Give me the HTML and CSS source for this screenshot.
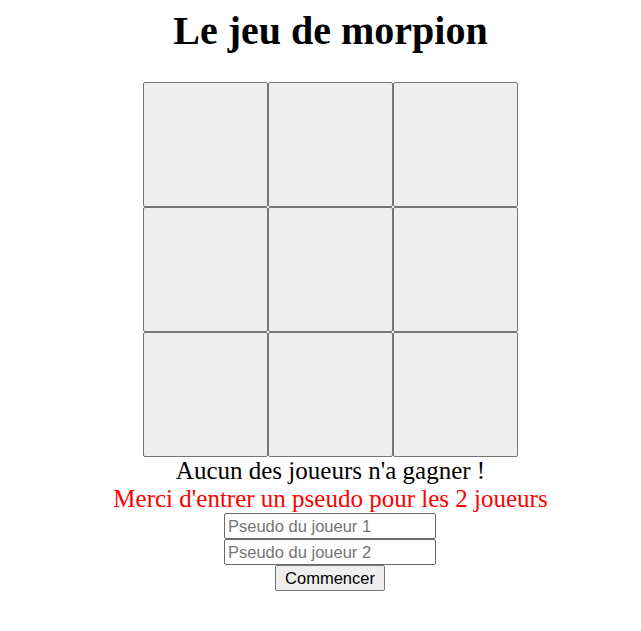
FILE: index.html
```html
<!DOCTYPE html>
<html lang="fr">
<head>
<meta charset="utf-8">
<title>Le jeu de morpion</title>
<link rel="stylesheet" href="styles.css">
</head>
<body>
<main class="page">
  <h1 class="title">Le jeu de morpion</h1>
  <div class="board">
    <button class="cell" type="button"></button>
    <button class="cell" type="button"></button>
    <button class="cell" type="button"></button>
    <button class="cell" type="button"></button>
    <button class="cell" type="button"></button>
    <button class="cell" type="button"></button>
    <button class="cell" type="button"></button>
    <button class="cell" type="button"></button>
    <button class="cell" type="button"></button>
  </div>
  <p class="status">Aucun des joueurs n'a gagner !</p>
  <p class="error">Merci d'entrer un pseudo pour les 2 joueurs</p>
  <form class="players">
    <input class="pseudo" type="text" placeholder="Pseudo du joueur 1">
    <input class="pseudo" type="text" placeholder="Pseudo du joueur 2">
    <button class="start" type="button">Commencer</button>
  </form>
</main>
</body>
</html>
```
FILE: styles.css
```css
html, body {
  margin: 0;
  padding: 0;
  background: #ffffff;
}

body {
  padding: 8px 8px 8px 28px;
  font-family: "Liberation Serif", "Times New Roman", serif;
  color: #000000;
}

.page {
  display: flex;
  flex-direction: column;
  align-items: center;
}

.title {
  margin: 0 0 28px;
  font-size: 40px;
  font-weight: bold;
  line-height: 46px;
  text-align: center;
}

.board {
  display: grid;
  grid-template-columns: repeat(3, 125px);
  grid-template-rows: repeat(3, 125px);
}

.cell {
  box-sizing: border-box;
  width: 125px;
  height: 125px;
  margin: 0;
  padding: 0;
  background: #efefef;
  border: 1px solid #767676;
  border-radius: 2px;
}

.status,
.error {
  margin: 0;
  font-size: 25px;
  line-height: 27.5px;
  text-align: center;
}

.error {
  color: #ff0000;
}

.players {
  display: flex;
  flex-direction: column;
  align-items: center;
  margin: 1px 1px 0 0;
}

.pseudo {
  box-sizing: border-box;
  width: 212px;
  height: 26px;
  margin: 0;
  padding: 1px 3px;
  font-family: "Liberation Sans", Arial, sans-serif;
  font-size: 16.5px;
  color: #000000;
  background: #ffffff;
  border: 1px solid #6a6a6a;
  border-radius: 2px;
}

.pseudo::placeholder {
  color: #757575;
}

.start {
  box-sizing: border-box;
  width: 110px;
  height: 26px;
  margin: 0;
  padding: 1px 6px;
  font-family: "Liberation Sans", Arial, sans-serif;
  font-size: 16.5px;
  color: #000000;
  background: #efefef;
  border: 1px solid #767676;
  border-radius: 2px;
}
```
